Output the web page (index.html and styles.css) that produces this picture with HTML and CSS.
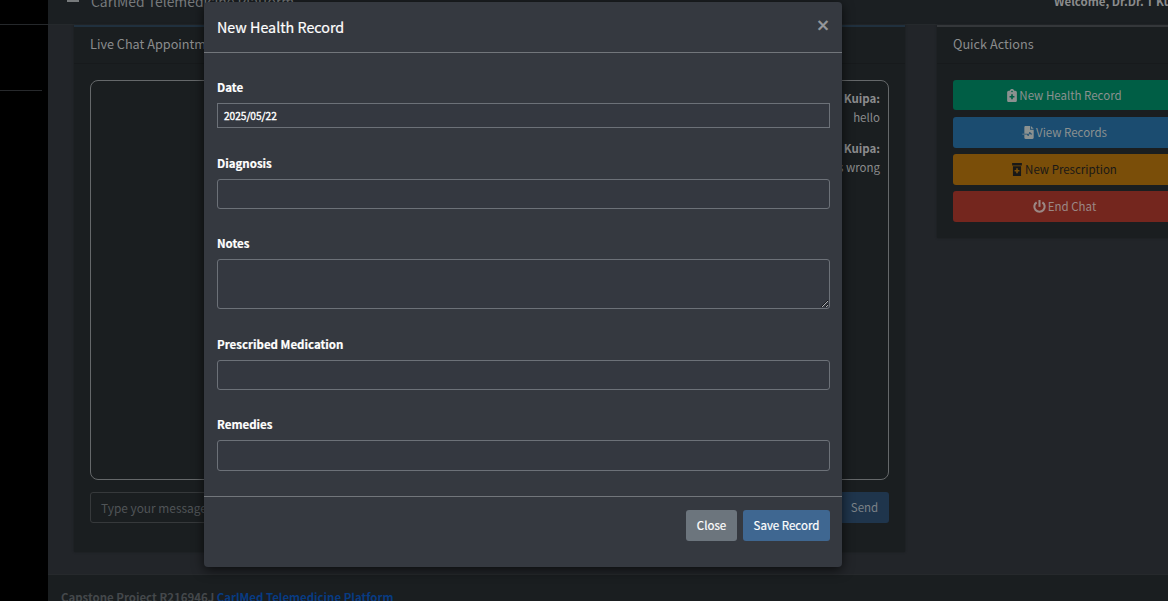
FILE: index.html
```html
<!DOCTYPE html>
<html lang="en">
<head>
<meta charset="utf-8">
<title>CarlMed Telemedicine Platform</title>
<link rel="stylesheet" href="styles.css">
</head>
<body>
<div class="app">
  <aside class="sidebar"><div class="brand"></div><div class="user"></div></aside>
  <div class="page">
    <header class="navbar">
      <span class="burger"></span>
      <span class="site">CarlMed Telemedicine Platform</span>
      <b class="welcome">Welcome, Dr.Dr. T Kuipa</b>
    </header>
    <main class="content">
      <section class="card chat">
        <h3 class="card-title">Live Chat Appointment</h3>
        <div class="card-body">
          <div class="messages">
            <div class="message"><b>Dr. T Kuipa:</b><span>hello</span></div>
            <div class="message"><b>Dr. T Kuipa:</b><span>what is wrong</span></div>
          </div>
          <div class="compose"><div class="message-input">Type your message...</div><button class="btn send">Send</button></div>
        </div>
      </section>
      <section class="card actions">
        <h3 class="card-title">Quick Actions</h3>
        <div class="action-list">
          <button class="btn green"><svg class="icon" viewBox="0 0 384 512"><path fill-rule="evenodd" d="M192 0c-42 0-77 27-90 64H64C29 64 0 93 0 128v320c0 35 29 64 64 64h256c35 0 64-29 64-64V128c0-35-29-64-64-64h-38C269 27 234 0 192 0zm0 64a32 32 0 1 1 0 64 32 32 0 1 1 0-64zM160 208h64v64h64v64h-64v64h-64v-64H96v-64h64z"/></svg><span>New Health Record</span></button>
          <button class="btn blue"><svg class="icon wide" viewBox="0 0 448 512"><path fill-rule="evenodd" d="M128 0h176v144h144v320c0 27-21 48-48 48H128c-27 0-48-21-48-48V336h108l24 48c8 15 29 14 36 0l49-98 16 33c4 8 9 12 18 12h53v-32h-43l-27-54c-7-15-28-15-36 0l-48 98-14-29c-4-7-9-10-16-10H80V48C80 21 101 0 128 0zm208 0 112 112H336zM0 304h80v32H0z"/></svg><span>View Records</span></button>
          <button class="btn amber"><svg class="icon" viewBox="0 0 384 512"><path fill-rule="evenodd" d="M0 0h384v96H0zM32 128h320v384H32zM160 208h64v64h64v64h-64v64h-64v-64H96v-64h64z"/></svg><span>New Prescription</span></button>
          <button class="btn red"><svg class="icon power" viewBox="0 0 512 512"><path d="M216 0h80v270h-80z"/><path class="ring" d="M143 89a204 204 0 1 0 226 0"/></svg><span>End Chat</span></button>
        </div>
      </section>
    </main>
    <footer class="footer"><span>Capstone Project R216946J </span><a>CarlMed Telemedicine Platform</a></footer>
  </div>
  <div class="modal">
    <div class="modal-header"><h4>New Health Record</h4><span class="close">×</span></div>
    <div class="modal-body">
      <label class="label">Date</label><div class="field date">2025/05/22</div>
      <label class="label">Diagnosis</label><div class="field"></div>
      <label class="label">Notes</label><textarea class="field notes"></textarea>
      <label class="label">Prescribed Medication</label><div class="field"></div>
      <label class="label">Remedies</label><div class="field last"></div>
    </div>
    <div class="modal-footer"><button class="btn cancel">Close</button><button class="btn save">Save Record</button></div>
  </div>
</div>
</body>
</html>
```
FILE: styles.css
```css
* { box-sizing: border-box; }
body { margin: 0; background: #222529; }
.app { position: relative; display: flex; width: 1168px; height: 601px; overflow: hidden; font: 11.5px/19px "Noto Sans CJK SC", sans-serif; color: #808080; }
.sidebar { flex: 0 0 48px; background: #000; }
.brand { height: 25px; border-bottom: 1px solid #25282b; }
.user { width: 42px; height: 66px; border-bottom: 1px solid #27292c; }
.page { flex: none; width: 1144px; display: flex; flex-direction: column; }
.navbar { flex: none; height: 25px; display: flex; align-items: flex-start; background: #1b1f22; border-bottom: 1px solid #25292c; padding-left: 19px; white-space: nowrap; }
.burger { width: 12px; height: 2px; background: #777a7c; }
.site { flex: none; width: 215px; margin: -8px 0 0 12px; font-size: 13.9px; color: #777a7c; }
.welcome { margin: -8px 0 0 748px; color: #8b8c8d; }
.content { flex: none; height: 549px; display: flex; align-items: flex-start; gap: 32px; padding-left: 26px; }
.card { background: #1a1e20; box-shadow: 0 0 2px #181b1d; }
.chat { width: 831px; height: 527px; border-top: 2px solid #20303e; }
.actions { width: 255px; height: 213px; border-top: 2px solid #34373a; }
.card-title { margin: 0; height: 37px; padding: 7px 16px; border-bottom: 1px solid #171a1c; font-size: 12.7px; font-weight: 400; line-height: 20px; color: #8b8c8d; }
.card-body { padding: 16px; }
.messages { height: 400px; padding: 8px; border: 1px solid #65686a; border-radius: 8px; }
.message { display: flex; flex-direction: column; align-items: flex-end; margin-bottom: 12px; color: #8b8c8d; }
.compose { display: flex; margin-top: 12px; height: 31px; }
.message-input { flex: 1; padding: 5px 10px; border: 1px solid #36393b; border-radius: 3px 0 0 3px; color: #505457; font-size: 11.9px; }
.btn { display: flex; justify-content: center; align-items: center; height: 31px; border: 0; border-radius: 3px; padding: 0; font: 11.5px/19px "Noto Sans CJK SC", sans-serif; white-space: nowrap; }
.send { width: 49px; border-radius: 0 3px 3px 0; background: #1f354c; color: #7c8287; }
.action-list { display: flex; flex-direction: column; gap: 6px; padding: 16px; }
.action-list .btn { gap: 2px; color: #8b9190; }
.action-list .btn.green { background: #005e45; height: 30px; margin-bottom: 1px; }
.action-list .btn.blue { background: #1b4c70; }
.action-list .btn.amber { background: #7a4e09; color: #191817; gap: 3px; }
.action-list .btn.red { background: #74261e; color: #9b8885; }
.icon { width: 10px; height: 13px; fill: currentColor; }
.wide { width: 12px; }
.icon.power { width: 13px; overflow: visible; }
.ring { fill: none; stroke: currentColor; stroke-width: 82; }
.footer { flex: none; height: 46px; background: #1a1e20; border-top: 1px solid #26292c; padding: 13px; font-size: 11.45px; font-weight: 700; color: #44484b; white-space: pre; }
.footer a { color: #083b82; }
.modal { position: absolute; left: 204px; top: 2px; width: 638px; height: 565px; display: flex; flex-direction: column; background: #353940; border-radius: 4px; box-shadow: 0 3px 12px #000a; color: #fff; -webkit-text-stroke: .2px currentColor; }
.modal-header { height: 51px; border-bottom: 1px solid #72767b; display: flex; justify-content: space-between; padding: 13px 12px 0 13px; }
.modal-header h4 { margin: 0; font-size: 14.3px; line-height: 24px; font-weight: 400; }
.close { font-size: 14px; line-height: 18px; font-weight: 700; color: #989a9e; -webkit-text-stroke: .6px currentColor; }
.modal-body { height: 444px; padding: 25px 12px 0 13px; border-bottom: 1px solid #72767b; display: flex; flex-direction: column; }
.label { font-weight: 700; font-size: 11.5px; line-height: 19px; margin-bottom: 6px; }
.field { flex: none; width: 613px; height: 30px; margin: 0 0 25px; border: 1px solid #6c7178; border-radius: 3px; background: #343840; }
.date { height: 25px; margin-bottom: 26px; border-radius: 0; padding: 3px 6px; font-size: 10.1px; line-height: 18px; -webkit-text-stroke: .35px currentColor; }
.notes { display: block; height: 50px; margin-bottom: 26px; resize: vertical; outline: none; }
.last { height: 31px; }
.modal-footer { display: flex; justify-content: flex-end; gap: 6px; padding: 13px 12px; }
.cancel { width: 51px; background: #6c757d; color: #fff; -webkit-text-stroke: inherit; }
.save { width: 87px; background: #3f6791; color: #fff; }
```
